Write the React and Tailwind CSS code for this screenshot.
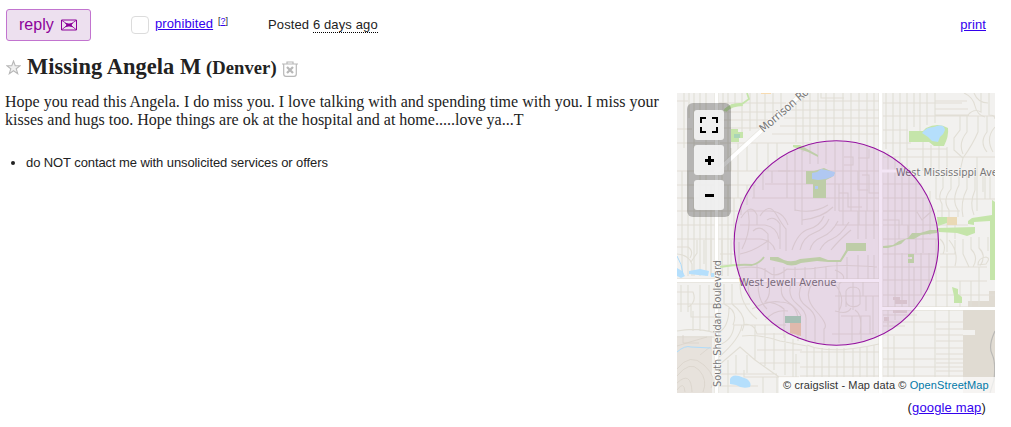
const minorRoads = [
  // north-west blocks
  'M684 93V148M689 93V118M694 93V148M700 93V113M706 93V175M677 101H688M677 129H692M677 143H716',
  'M723 93V110M728 93V171M735 93V104M742 93V137M750 93V131M757 93V128M765 93V124M773 93V117M781 93V112M719 103H786M719 112H777M719 120H768M722 128H759M720 143H812M731 148V171M738 143V198M747 143V171M757 143V171M768 143V171M777 143V159',
  'M796 98V142M803 93V152M810 93V141M818 93V141M826 93V141M834 93V141M843 93V140M851 93V141M859 93V142M867 93V145M874 93V148M787 110H879M796 101H879M784 118H879M780 126H879M772 134H879M821 93V98H844',
  // west column
  'M677 171H790M677 185H756M677 198H748M677 211H742M677 225H736M677 239H735M682 171V276M688 171V276M694 198V276M700 171V276M706 171V276M711 185V276M722 171V276M728 185V276M734 198V237M741 198V215M747 185V205M754 185V198M763 171V190M772 171V183',
  // circle interior, west half
  'M778 171H879M765 184H879M752 198H879M747 211H770Q783 211 788 225M740 225H765Q777 227 779 239M735 239H760Q772 240 775 250',
  'M787 155V198M795 150V211M802 148V225M810 145V164M818 142V164M826 142V164M835 142V211M843 142V225M851 142V211M859 143V225M867 145V211M874 148V225',
  'M741 218Q751 202 757 215V225M748 211Q752 230 742 249M760 216Q769 202 776 214T786 229V251M767 220Q774 215 780 224V249M753 231Q760 224 768 234V250M740 254Q755 251 769 240',
  'M792 250Q798 232 809 229T824 216M800 250Q803 237 814 233T829 219M810 250Q812 241 822 237T838 221M820 250Q824 242 832 239T849 222M831 250Q839 240 851 230M795 210Q814 214 828 205M802 220Q822 218 833 207',
  'M844 157H853V165H844M858 158H869V149M858 171V190H868M839 193H848V207H862M862 175H869V193H879M839 211H879M835 225H879M858 239V211M866 239V211M874 239V211M839 184V211',
  // circle interior, south
  'M740 268Q760 265 768 272T787 269Q807 270 824 267T877 267M757 264V280M765 268V280M774 267V280M784 267V280M795 267V280M805 267V280M815 267V280M826 267V280M837 262V280M847 257V280M858 255V280M868 255V280M874 255V280',
  'M748 284Q748 300 757 306M758 284Q758 301 767 309M769 284Q771 296 765 302Q776 302 784 309V338M782 284Q779 296 788 302T798 318V341M791 284Q787 296 797 304T806 320V342M802 284Q795 298 806 306T815 322V343M812 284Q803 297 816 311T824 329V345',
  'M752 309Q768 300 780 302Q794 302 801 316M765 320Q775 309 788 311M839 284V343M835 270Q850 276 839 284M846 291V307M846 291Q848 287 853 287Q860 287 860 293V304Q857 308 850 306Q845 304 846 297M853 282V310M835 296H879M835 311Q848 315 851 308M835 284Q846 298 839 311M863 281V296M866 296V311M873 296V334M855 310Q863 315 860 334M841 316H870V334M852 316V342M861 316V340M832 334H877',
  // circle interior, east half
  'M883 171H909M883 184H922M883 198H930M883 211H935M883 225H938M883 239H938M883 254H938M883 267H937M883 280H934M883 295H927M883 315H917M883 326H905M888 152V325M895 157V253M902 162V225M909 168V308M916 174V253M923 198V253M930 191V235M936 239V267M895 253V320M902 253V308M914 267V308M921 253V295M929 253V290M917 212L922 220L934 209M883 220H899V239M908 225V239H930',
  // north-east
  'M886 93V149M893 93V155M900 93V162M907 93V168M914 93V127M920 93V131M927 93V125M935 93V123M883 103H962M883 116H995M883 130H908M883 143H911M883 157H995M935 93V115H969M935 101H967M935 109H968',
  'M964 93Q973 97 975 106T985 117M974 93Q978 103 988 103M981 93V112Q974 108 968 115M989 93V115Q995 115 995 119M960 116V130L954 138V150L963 158L960 171M967 116V132Q958 143 963 154M978 116V132Q973 144 963 158M987 116V132Q979 142 987 152M995 127Q985 138 993 152M947 147V171M939 145V171M931 145V171M923 140V171M907 149H947',
  'M936 176V199M943 176V188Q937 196 942 204V217M951 176V189Q942 200 949 210V217M959 176V185Q951 200 958 210V217M967 176V189Q960 202 963 217M975 176V190Q969 204 974 215M983 176V192M990 176V199M936 199H995M937 211H960M939 225H968M977 211V157M985 199V171M947 218V252M955 218V239',
  'M940 254H955V240M940 267H987M936 281H987M927 295H995M940 239Q947 245 943 254M949 240Q959 252 955 266M963 239V254Q965 258 969 267M971 237V249Q979 257 973 267M979 237V248Q987 256 980 266M988 237V251M978 265Q978 258 986 257Q991 258 986 264Z M947 254V308M936 267V308M960 281V308M971 281V308M979 267V308',
  // south-east grid
  'M883 322H963M883 335H963M883 348H963M883 359H963M883 367H963M883 376H963M888 321V377M894 336V377M914 310V377M935 310V377M949 310V377M936 329H963M936 341H963M936 354H963M936 363H963M936 371H963',
  // south strip
  'M807 345Q830 355 879 344M800 352H879M800 367H879M800 376H879M807 346V377M814 347V377M822 348V377M829 348V377M837 348V377M844 348V377M853 348V377M860 347V377M867 346V377M874 345V377M719 365L740 347L755 360L779 377M719 357Q740 339 742 325H786M719 345Q733 340 734 325H765M719 332Q729 327 729 307M724 284V304Q739 311 733 325M732 284V304Q749 317 742 331M740 284Q740 305 757 319M750 304H719M742 325Q754 322 757 334H793M742 336Q759 334 780 341L807 346M755 325V360M765 325V366M774 333V370M785 335V375M793 339V377M757 350H802M760 363H800M728 360V393M736 355V374M747 355V373M719 374H777M719 386H758M744 370V377H799M796 354V377M777 377V393M763 377V393',
  // south-west
  'M677 247H688Q694 251 690 258M677 254Q689 255 692 264V276M697 240V253L691 262M704 240V264M711 240V275M722 240V276M731 240V265M739 242V276M677 292H693Q697 302 688 307M681 285V312M688 285V312M700 285V331M709 285V331M677 304H716M691 304V317H714M693 311V331M677 331Q697 327 715 333M677 337H714M720 265H735M720 254H735',
];

const darkLanes = [
  'M677 369Q690 352 704 365T711 388M677 376Q690 360 699 370T703 392M677 383Q691 370 692 392M685 392Q684 380 677 390M677 346Q693 341 707 337M683 335V343H699M710 347L700 355',
];

function StreetMap() {
  return (
    <svg className="block h-[300px] w-[318px]" viewBox="677 93 318 300" aria-hidden="true">
      <rect x="677" y="93" width="318" height="300" fill="#f2f1ef" />
      <path d="M677 336H712V393H677Z" fill="#e7e2dc" />
      <path d="M963 309H995V393H963Z M989 291H995V308H968V301H989Z" fill="#e0dbd2" />
      <path d="M963 330H975V335H963Z" fill="#f2f1ef" />
      <g fill="none" stroke="#e1ded5" strokeWidth="1.1">
        {minorRoads.map((d) => <path key={d} d={d} />)}
      </g>
      <g fill="none" stroke="#d9d3ca" strokeWidth="0.8">
        {darkLanes.map((d) => <path key={d} d={d} />)}
      </g>
      <g fill="#c5e5aa">
        <path d="M724 109L732 104Q743 103 743 106Q732 106 726 112Z" />
        <path d="M731 129H738V132H743V138H739V142H731Z" />
        <path d="M909 131H923L926 128Q938 122 948 128Q949 136 944 146H934L929 142H909Z" />
        <path d="M937 217H947V223L938 226Z" />
        <path d="M968 224V221L972 218L992 215V200L995 202V237H990V221L974 222V225Z" />
        <path d="M937 228L975 227V233L967 236L957 233L939 232Z" />
        <path d="M990 237H995V280H990Z" />
        <path d="M952 287L958 289V294L962 297V303H954V296Z" />
        <path d="M793 145H800L818 155V157L808 152L793 147Z" />
        <path d="M806 171H814L824 168L835 173L832 177L826 180V198H813V184H806Z" />
        <path d="M770 257H778L784 260Q792 263 800 259L820 257L828 260H840L846 250V243H866V251H848L841 262H828L817 261L801 263Q791 268 783 263L770 260Z" />
        <path d="M883 246L893 245L899 241L908 238L912 233H920L930 230H937V233L921 235L914 239L906 239L901 244L888 248H883Z" />
        <path d="M908 254H914V263H908V259H912V257H908Z" />
      </g>
      <path d="M724 111Q731 103 742 104L749 99L747 93M720 267Q738 264 752 265Q760 263 764 257" fill="none" stroke="#c5e5aa" strokeWidth="1.8" />
      <path d="M734 134H740V138H734Z M785 316H801V323H785Z" fill="#a9d4b7" />
      <path d="M790 323H801V336L790 333Z" fill="#e9cfae" />
      <path d="M947 217H957V225H947Z" fill="#ead9b5" />
      <path d="M893 297H900V300H907V304H895V300H893ZM893 310H907V313H893ZM884 317H889V321H884Z" fill="#e0d8d3" />
      <path d="M761 93H771V94H761Z" fill="#f8dbb0" />
      <g fill="#b5dffc">
        <path d="M922 133Q926 127 934 127Q944 123 945 130Q944 134 940 137L938 142L932 141L928 137Z" />
        <path d="M812 173L817 172L821 169L826 170L835 172L834 176L826 179L818 180L812 179Z" />
        <path d="M815 186H818V189H815Z" />
        <path d="M689 271L700 269L709 271L708 276L698 275L689 274Z M711 273H715V277H711Z" />
        <path d="M677 268L682 271L685 276L681 278L677 276Z" />
        <path d="M730 379Q732 374 739 376L747 379Q752 383 750 387Q742 389 736 385L730 384Z" />
      </g>
      <path d="M677 352Q685 345 691 347L711 348M677 256Q682 264 683 274" fill="none" stroke="#afdcfb" strokeWidth="1" />
      <path d="M995 331Q988 346 992 354T994 380L990 393" fill="none" stroke="#b9b8b5" strokeWidth="1.2" />
      <g fill="none" stroke="#dedbd2" strokeWidth="5">
        <path d="M716.5 93V393M880.7 93V393M720 168L805 91" strokeOpacity="0.5" />
        <path d="M677 280.6H881M881 308.5H995" strokeOpacity="0.5" />
      </g>
      <g fill="none" stroke="#fff">
        <path d="M716.5 93V393M880.7 93V393" strokeWidth="3.4" />
        <path d="M715 173L805 91" strokeWidth="4" />
        <path d="M677 280.6H881M881 308.5H995" strokeWidth="3" />
        <path d="M881 171H907" strokeWidth="3" />
      </g>
      <g fill="#777" stroke="#f7f6f4" strokeWidth="1.2" paintOrder="stroke" fontFamily="'DejaVu Sans', sans-serif" fontSize="11">
        <text x="896" y="175.7" textLength="102" lengthAdjust="spacingAndGlyphs">West Mississippi Ave</text>
        <text x="739" y="285.5" textLength="97.5" lengthAdjust="spacingAndGlyphs">West Jewell Avenue</text>
        <text transform="translate(721 387) rotate(-90)" textLength="127" lengthAdjust="spacingAndGlyphs">South Sheridan Boulevard</text>
        <text transform="translate(763.5 133) rotate(-41)" fontSize="11.5" textLength="61" lengthAdjust="spacingAndGlyphs">Morrison Ro</text>
      </g>
      <circle cx="836.3" cy="243" r="102.2" fill="#880099" fillOpacity="0.1" stroke="#94109f" strokeWidth="1.1" />
    </svg>
  );
}

function MapButton({ label, children }) {
  return (
    <button aria-label={label} className="flex h-[30px] w-[30px] items-center justify-center rounded-[3px] bg-[#f5f5f5]/90">
      <svg className="h-[30px] w-[30px]" viewBox="0 0 30 30" fill="none" stroke="#000" strokeWidth="2">{children}</svg>
    </button>
  );
}

export default function App() {
  return (
    <main className="h-[427px] w-[1011px] overflow-hidden bg-white pl-[6px] font-['Liberation_Sans',sans-serif] text-[13px] text-[#222]">
      <header className="flex h-[50px] items-start pt-[9px]">
        <button className="flex h-8 w-[85px] items-center rounded-[3px] border border-[#c274cf] bg-[#ede0ef] pl-[12px] text-[16px] text-[#8c0099]">
          reply
          <svg className="ml-[7px] h-[12px] w-[16px]" viewBox="0 0 16 12" fill="none" stroke="#8c0099">
            <path d="M.5 1H15.5V11H.5Z" />
            <path d="M1 1.5L6 5M15 1.5L10 5M1 10.5L6 6.5M15 10.5L10 6.5" strokeWidth="0.8" />
            <path d="M4.5 4.3L8 5L11.5 4.3L10 6L11.5 7.7L8 7L4.5 7.7L6 6Z" fill="#8c0099" strokeWidth="0.8" />
          </svg>
        </button>
        <span className="ml-[40px] mt-[7px] h-[18px] w-[18px] rounded-[4px] border border-[#dcdcdc]" />
        <a className="ml-[6px] mt-[7px] w-[58px] leading-[15px] tracking-[0.1px] text-[#3300ee] underline">prohibited</a>
        <a className="ml-[5px] mt-[6px] w-[11px] text-[9px] leading-[12px] text-[#222]">[<span className="text-[#3300ee] underline">?</span>]</a>
        <p className="ml-[39px] mt-[8px] whitespace-nowrap leading-[15px] tracking-[0.12px]">
          Posted <span className="inline-block h-[16px] border-b border-dotted border-black">6 days ago</span>
        </p>
        <a className="ml-auto mr-[25px] mt-[8px] leading-[15px] tracking-[0.1px] text-[#3300ee] underline">print</a>
      </header>

      <h2 className="flex h-[43px] items-start font-['Liberation_Serif',serif] text-[22.4px] font-bold">
        <svg className="mt-[10px] h-[15px] w-[15px]" viewBox="0 0 15 15" fill="#f0f0f0" stroke="#b8b8b8" strokeWidth="1.1">
          <path d="M7.5 1L9.2 5.7H14.2L10.2 8.7L11.7 13.7L7.5 10.7L3.3 13.7L4.8 8.7L.8 5.7H5.8Z" />
        </svg>
        <span className="ml-[6px] mt-[4px] whitespace-pre leading-[26px] tracking-[0.08px]">Missing Angela M <span className="-ml-px text-[18.6px]">(Denver)</span></span>
        <svg className="ml-[5px] mt-[11px] h-[17px] w-[16px]" viewBox="0 0 16 17" fill="none" stroke="#b8b8b8" strokeWidth="1.2">
          <path d="M0 3H16M5 3V1H11V3M1.7 3V13Q1.7 15.3 4 15.3H12Q14.3 15.3 14.3 13V3" />
          <path d="M5 6L11 12M11 6L5 12" strokeWidth="2.3" />
        </svg>
      </h2>

      <div className="flex">
        <section className="w-[671px]">
          <p className="-ml-px whitespace-nowrap font-['Liberation_Serif',serif] text-[16px] leading-[18px] tracking-[0.01px]">
            Hope you read this Angela. I do miss you. I love talking with and spending time with you. I miss your<br />
            kisses and hugs too. Hope things are ok at the hospital and at home.....love ya...T
          </p>
          <ul className="mt-[26px]">
            <li className="flex items-center leading-[15px] tracking-[-0.09px]">
              <span className="ml-[5px] mr-[11px] h-[4px] w-[4px] rounded-full bg-[#222]" />
              do NOT contact me with unsolicited services or offers
            </li>
          </ul>
        </section>

        <aside className="w-[318px]">
          <div className="relative h-[300px] overflow-hidden">
            <StreetMap />
            <div className="absolute left-[10px] top-[10px] flex flex-col gap-[5px] rounded-[6px] bg-black/25 p-[7px]">
              <MapButton label="Full screen">
                <path d="M7 13V8H12M18 8H23V13M23 17V22H18M12 22H7V17" />
              </MapButton>
              <MapButton label="Zoom in">
                <path d="M11 15.5H20M15.5 11V20" strokeWidth="3" />
              </MapButton>
              <MapButton label="Zoom out">
                <path d="M11 15.5H20" strokeWidth="3" />
              </MapButton>
            </div>
            <p className="absolute bottom-0 right-0 h-[16px] w-[216px] whitespace-nowrap bg-white/70 pl-[4px] text-[11px] leading-[17px] tracking-[0.11px] text-[#333]">
              © craigslist - Map data © <a className="text-[#0078a8]">OpenStreetMap</a>
            </p>
          </div>
          <p className="mr-[9px] mt-[7px] text-right leading-[15px] tracking-[0.15px]">(<a className="text-[#3300ee] underline">google map</a>)</p>
        </aside>
      </div>
    </main>
  );
}
